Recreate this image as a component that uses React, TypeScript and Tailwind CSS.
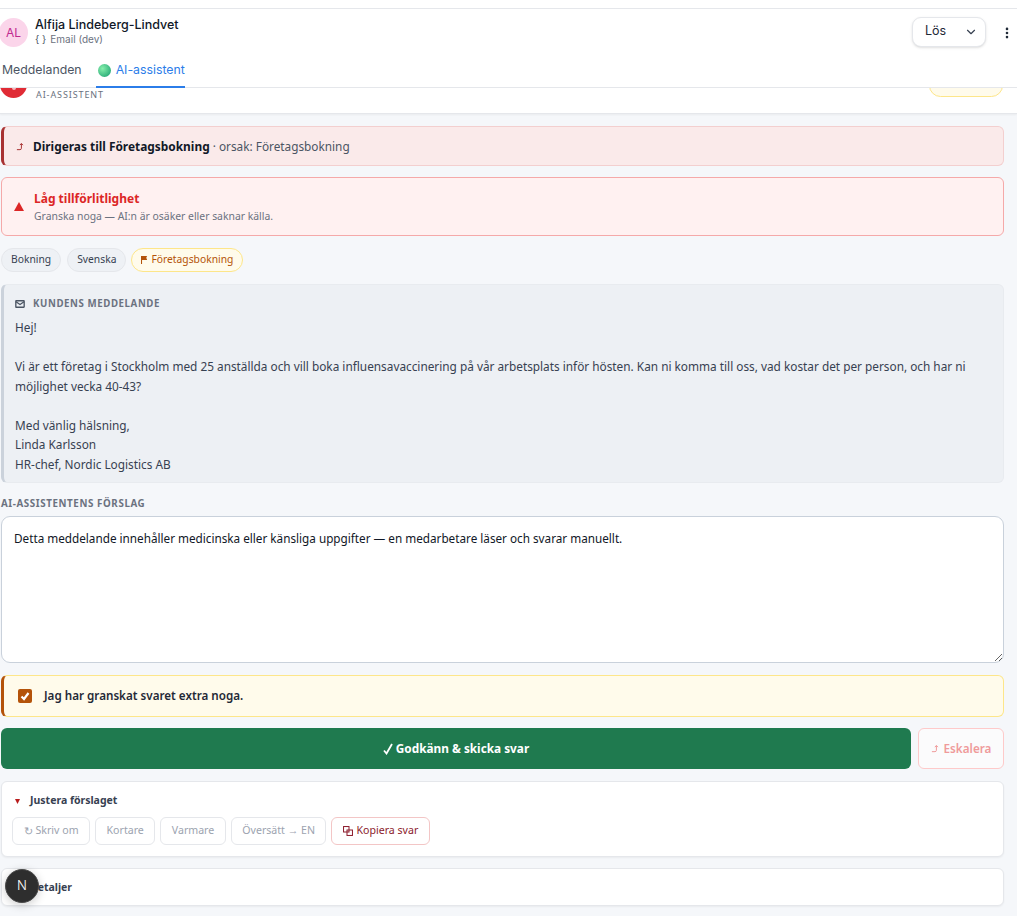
import React from "react";
import { ChevronDown, MoreVertical } from "lucide-react";

const body = "font-['Noto_Sans','Open_Sans',sans-serif]";

function Route({ className = "" }: { className?: string }) {
  return (
    <svg viewBox="0 0 10 10" className={className} fill="none" stroke="currentColor" strokeWidth="1.1">
      <path d="M1 8.5h3.5c1 0 1.500-.6 1.500-1.500V2" />
      <path d="M4.300 3.500 6 1.600 7.700 3.500" />
    </svg>
  );
}

export default function App() {
  return (
    <div className={`relative h-[916px] w-[1017px] overflow-hidden bg-[#f5f7fa] ${body}`}>
      <div className="h-[8px] bg-white" />
      <header className="relative z-10 border-y border-[#e5e7eb] bg-white">
        <div className="flex h-[47px] items-center">
          <div className="ml-[-1px] flex h-[29px] w-[29px] shrink-0 items-center justify-center rounded-full bg-[#fbd5ea] font-['Inter',sans-serif] text-[12px] text-[#c02a8f]">
            AL
          </div>
          <div className="ml-[7px] flex-1 pb-[2px]">
            <div className="font-['Inter',sans-serif] text-[12.500px] leading-[16px] font-medium text-[#111827]">
              Alfija Lindeberg-Lindvet
            </div>
            <div className="flex items-center gap-[4px] font-['Inter',sans-serif] text-[10px] leading-[13px] text-[#6b7280]">
              <span className="text-[#4b5563]">{"{ }"}</span>
              <span>Email (dev)</span>
            </div>
          </div>
          <button className="mb-[2px] flex h-[30px] w-[74px] items-center justify-between rounded-[9px] border border-[#e5e7eb] bg-white pr-[7px] pl-[12px] font-['Inter',sans-serif] text-[12.500px] text-[#1f2937] shadow-sm">
            Lös
            <ChevronDown className="h-[14px] w-[14px] text-[#374151]" strokeWidth={2} />
          </button>
          <MoreVertical className="mr-[3px] ml-[14px] h-[14px] w-[14px] text-[#1f2937]" strokeWidth={2.500} />
        </div>
        <nav className="flex h-[31px] items-stretch font-['Inter',sans-serif] text-[12.300px]">
          <div className="flex items-center pb-[3px] pl-[2px] text-[#4b5563]">Meddelanden</div>
          <div className="ml-[14px] -mb-px flex items-center gap-[5px] border-b-2 border-[#2b7de9] pb-[2px] pl-[2px] text-[#2b7de9]">
            <span className="h-[13px] w-[13px] rounded-full bg-[radial-gradient(circle_at_35%_35%,#86efac,#34b37e_70%,#4a9fc0)]" />
            <span>AI-assistent</span>
          </div>
        </nav>
      </header>

      <section className="flex h-[26px] items-start justify-between overflow-hidden border-b border-[#e5e7eb] bg-white shadow-[0_1px_2px_rgba(0,0,0,0.05)]">
        <div className="flex items-start">
          <div className="mt-[-17px] flex h-[27px] w-[27px] items-end justify-center rounded-full bg-[#e02b35] pb-[8px]">
            <span className="h-[2px] w-[4px] rounded-b-full bg-[#f6b9bd]" />
          </div>
          <div className="ml-[9px] pt-[1px] text-[9px] leading-[12px] tracking-[0.1em] text-[#6b7280]">AI-ASSISTENT</div>
        </div>
        <div className="mr-[14px] mt-[-14px] h-[23px] w-[74px] rounded-full border border-[#fde68a] bg-[#fffbeb]" />
      </section>

      <main className="flex flex-col pt-[12px] pr-[13px] pl-[1px]">
        <div className="flex h-[40px] items-center rounded-[6px] border border-l-[3px] border-[#f3cfcf] border-l-[#a83232] bg-[#faeaea] pt-[1px] pl-[12px] text-[11.800px] text-[#4b5563]">
          <Route className="mr-[8px] h-[9px] w-[9px] text-[#a83232]" />
          <span>
            <b className="text-[11.900px] font-bold text-[#111827]">Dirigeras till Företagsbokning</b> · orsak: Företagsbokning
          </span>
        </div>

        <div className="mt-[11px] flex h-[59px] items-center rounded-[6px] border border-[#f5a9a9] bg-[#fff1f1] pl-[12px]">
          <svg viewBox="0 0 10 9" className="mr-[10px] h-[9px] w-[10px] fill-[#dc2626]">
            <polygon points="5,0 10,9 0,9" />
          </svg>
          <div>
            <div className="text-[12px] leading-[17px] font-bold text-[#dc2626]">Låg tillförlitlighet</div>
            <div className="mt-[3px] text-[10.400px] leading-[13px] text-[#6b7280]">Granska noga — AI:n är osäker eller saknar källa.</div>
          </div>
        </div>

        <div className="mt-[12px] flex gap-[5px] text-[10.300px]">
          <span className="flex h-[24px] items-center rounded-full border border-[#e5e7eb] bg-[#eef1f5] px-[9px] text-[#374151]">Bokning</span>
          <span className="ml-[1px] flex h-[24px] items-center rounded-full border border-[#e5e7eb] bg-[#eef1f5] px-[9px] text-[#374151]">Svenska</span>
          <span className="flex h-[24px] items-center gap-[3px] rounded-full border border-[#fde68a] bg-[#fffbeb] px-[9px] text-[#b45309]">
            <svg viewBox="0 0 8 9" className="h-[8px] w-[7px] fill-[#b45309]">
              <path d="M0 0h7l-1 2 1 2.500H1.200V9H0z" />
            </svg>
            Företagsbokning
          </span>
        </div>

        <div className="mt-[12px] rounded-[6px] border border-l-[3px] border-[#e8ebef] border-l-[#cbd2db] bg-[#edf0f4] pt-[12px] pr-[12px] pb-[8px] pl-[11px]">
          <div className="flex h-[14px] items-center gap-[8px] text-[9.700px] font-bold tracking-[0.06em] text-[#6b7280]">
            <svg viewBox="0 0 11 9" className="h-[8px] w-[10px]" fill="none" stroke="#4b5563" strokeWidth="1.500">
              <rect x="0.800" y="0.800" width="9.400" height="7.400" rx="0.500" />
              <path d="M1 2l4.500 3L10 2" />
            </svg>
            KUNDENS MEDDELANDE
          </div>
          <p className="mt-[7px] text-[11.820px] leading-[19.500px] whitespace-pre-line text-[#374151]">
            {"Hej!\n\nVi är ett företag i Stockholm med 25 anställda och vill boka influensavaccinering på vår arbetsplats inför hösten. Kan ni komma till oss, vad kostar det per person, och har ni möjlighet vecka 40-43?\n\nMed vänlig hälsning,\nLinda Karlsson\nHR-chef, Nordic Logistics AB"}
          </p>
        </div>

        <div className="mt-[14px] text-[9.800px] leading-[13px] font-bold tracking-[0.06em] text-[#6b7280]">AI-ASSISTENTENS FÖRSLAG</div>

        <textarea
          readOnly
          className="mt-[6px] h-[147px] w-full rounded-[9px] border border-[#c9d1db] bg-white px-[12px] pt-[12px] text-[11.730px] leading-[18px] text-[#111827] outline-none"
          value="Detta meddelande innehåller medicinska eller känsliga uppgifter — en medarbetare läser och svarar manuellt."
        />

        <label className="mt-[12px] flex h-[42px] items-center rounded-[6px] border border-l-[3px] border-[#fde68a] border-l-[#b45309] bg-[#fffbeb] pl-[14px]">
          <span className="flex h-[14px] w-[14px] items-center justify-center rounded-[2px] bg-[#b45309]">
            <svg viewBox="0 0 12 12" className="h-[12px] w-[12px]" fill="none" stroke="white" strokeWidth="2.200">
              <path d="M2.500 6.500 5 9l4.500-6" />
            </svg>
          </span>
          <span className="ml-[12px] text-[11.650px] font-semibold text-[#1f2937]">Jag har granskat svaret extra noga.</span>
        </label>

        <div className="mt-[11px] flex gap-[7px]">
          <button className="flex h-[41px] flex-1 items-center justify-center rounded-[6px] bg-[#1f7a4f] text-[11.800px] font-bold text-white">
            <svg viewBox="0 0 10 12" className="mr-[3px] h-[12px] w-[10px]" fill="none" stroke="white" strokeWidth="1.800">
              <path d="M1 7.500 3.500 10.500 9 1" />
            </svg>
            Godkänn &amp; skicka svar
          </button>
          <button className="flex h-[41px] w-[86px] items-center justify-center gap-[4px] rounded-[6px] border border-[#fecaca] bg-[#fbfbfc] text-[11.700px] font-semibold text-[#ef9a9a]">
            <Route className="h-[9px] w-[9px]" />
            Eskalera
          </button>
        </div>

        <div className="mt-[12px] h-[76px] rounded-[6px] border border-[#e5e7eb] bg-white pt-[10px] pl-[10px] shadow-[0_1px_2px_rgba(0,0,0,0.05)]">
          <div className="flex h-[18px] items-center text-[10.500px] font-bold text-[#374151]">
            <svg viewBox="0 0 6 6" className="ml-[3px] h-[5px] w-[5px] fill-[#b91c1c]">
              <polygon points="0,0 6,0 3,6" />
            </svg>
            <span className="ml-[10px]">Justera förslaget</span>
          </div>
          <div className="mt-[7px] flex gap-[5px] text-[10.600px] text-[#9ca3af]">
            <span className="flex h-[28px] items-center gap-[3px] rounded-[6px] border border-[#e5e7eb] px-[10.500px]">
              <span className="text-[11px]">↻</span> Skriv om
            </span>
            <span className="flex h-[28px] items-center rounded-[6px] border border-[#e5e7eb] px-[10.500px]">Kortare</span>
            <span className="flex h-[28px] items-center rounded-[6px] border border-[#e5e7eb] px-[10.500px]">Varmare</span>
            <span className="flex h-[28px] items-center rounded-[6px] border border-[#e5e7eb] px-[10.500px]">Översätt → EN</span>
            <span className="flex h-[28px] items-center gap-[3px] rounded-[6px] border border-[#f3c6c6] px-[11px] text-[#8b1a2b]">
              <svg viewBox="0 0 11 11" className="h-[10px] w-[10px]" fill="none" stroke="#8b1a2b" strokeWidth="1.100">
                <rect x="0.600" y="0.600" width="6" height="6" />
                <rect x="4.400" y="4.400" width="6" height="6" />
              </svg>
              Kopiera svar
            </span>
          </div>
        </div>

        <div className="mt-[11px] flex h-[38px] items-center rounded-[6px] border border-[#e5e7eb] bg-white pt-[1px] pl-[11px] text-[10.500px] font-bold text-[#374151] shadow-[0_1px_2px_rgba(0,0,0,0.05)]">
          <svg viewBox="0 0 6 6" className="ml-[2px] h-[5px] w-[5px] fill-[#b91c1c]">
            <polygon points="0,0 6,6 0,6" />
          </svg>
          <span className="ml-[10px]">Detaljer</span>
        </div>
      </main>

      <div className="absolute top-[869px] left-[5px] flex h-[34px] w-[34px] items-center justify-center rounded-full border border-[#4b4b4b] bg-[#2e2e2e] font-['Inter',sans-serif] text-[13px] font-light text-white shadow-[0_2px_10px_rgba(0,0,0,0.2)]">
        N
      </div>
    </div>
  );
}
